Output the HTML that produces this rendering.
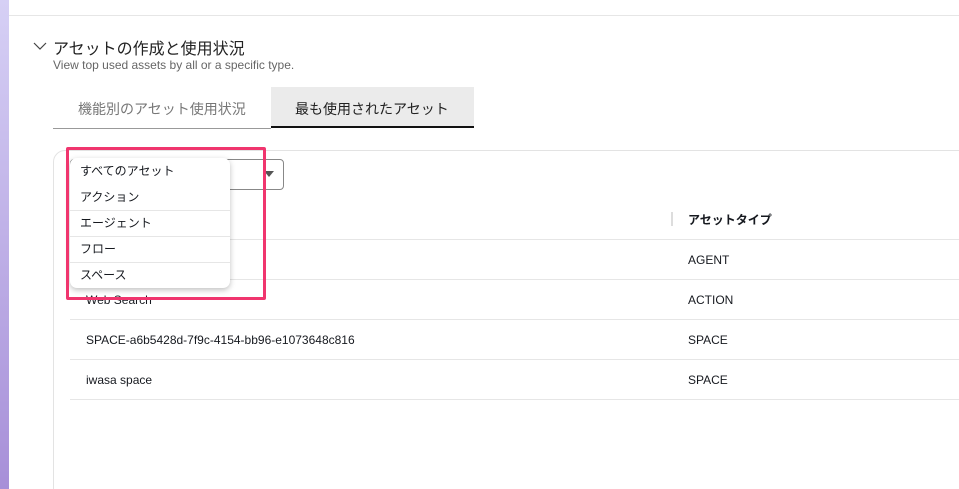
<!DOCTYPE html>
<html><head><meta charset="utf-8"><style>
*{margin:0;padding:0;box-sizing:border-box}
html,body{width:959px;height:489px;overflow:hidden}
body{background:#fff;position:relative;font-family:"Liberation Sans","Noto Sans CJK JP",sans-serif;color:#16191f}
.abs{position:absolute}
.strip{left:0;top:0;width:9px;height:489px;background:linear-gradient(#d6d0f5,#a78fd8)}
.line{background:#e6e6e6;height:1px}
.t{font-size:12px;white-space:nowrap}
</style></head><body>
<div class="abs strip"></div>
<div class="abs line" style="left:9px;top:15px;width:950px"></div>
<svg class="abs" style="left:33px;top:41px" width="14" height="10"><path d="M1 2 L7 8 L13 2" fill="none" stroke="#444" stroke-width="1.2"/></svg>
<div class="abs" style="left:53px;top:35px;font-size:16px;color:#222">アセットの作成と使用状況</div>
<div class="abs" style="left:53px;top:58px;font-size:12px;color:#666">View top used assets by all or a specific type.</div>
<div class="abs" style="left:53px;top:128px;width:218px;height:1px;background:#999"></div>
<div class="abs" style="left:78px;top:99px;font-size:14px;color:#777">機能別のアセット使用状況</div>
<div class="abs" style="left:271px;top:87px;width:203px;height:41px;background:#ebebeb;border-bottom:2px solid #111"></div>
<div class="abs" style="left:295px;top:99px;font-size:14px;color:#222">最も使用されたアセット</div>
<div class="abs" style="left:53px;top:150px;width:920px;height:360px;border:1px solid #e3e3e3;border-radius:12px"></div>
<div class="abs" style="left:70px;top:159px;width:214px;height:31px;border:1px solid #888;border-radius:4px"></div>
<svg class="abs" style="left:263px;top:170px" width="12" height="8"><path d="M1 1 L11 1 L6 7 Z" fill="#555"/></svg>
<div class="abs" style="left:671px;top:212px;width:2px;height:14px;background:#ddd"></div>
<div class="abs t" style="left:688px;top:211px;font-weight:bold">アセットタイプ</div>
<div class="abs line" style="left:70px;top:239px;width:889px"></div>
<div class="abs line" style="left:70px;top:279px;width:889px"></div>
<div class="abs line" style="left:70px;top:319px;width:889px"></div>
<div class="abs line" style="left:70px;top:359px;width:889px"></div>
<div class="abs line" style="left:70px;top:399px;width:889px"></div>
<div class="abs t" style="left:688px;top:253px">AGENT</div>
<div class="abs t" style="left:86px;top:293px">Web Search</div>
<div class="abs t" style="left:688px;top:293px">ACTION</div>
<div class="abs t" style="left:86px;top:333px">SPACE-a6b5428d-7f9c-4154-bb96-e1073648c816</div>
<div class="abs t" style="left:688px;top:333px">SPACE</div>
<div class="abs t" style="left:86px;top:373px">iwasa space</div>
<div class="abs t" style="left:688px;top:373px">SPACE</div>
<div class="abs" style="left:70px;top:158px;width:160px;height:130px;background:#fff;border-radius:7px;box-shadow:0 2px 6px rgba(0,0,0,.25)">
<div class="abs t" style="left:10px;top:4px">すべてのアセット</div>
<div class="abs t" style="left:10px;top:30px">アクション</div>
<div class="abs line" style="left:0;top:52px;width:160px"></div>
<div class="abs t" style="left:10px;top:56px">エージェント</div>
<div class="abs line" style="left:0;top:78px;width:160px"></div>
<div class="abs t" style="left:10px;top:82px">フロー</div>
<div class="abs line" style="left:0;top:104px;width:160px"></div>
<div class="abs t" style="left:10px;top:108px">スペース</div>
</div>
<div class="abs" style="left:66px;top:147px;width:200px;height:153px;border:3px solid #f0356e;border-radius:2px"></div>
</body></html>
